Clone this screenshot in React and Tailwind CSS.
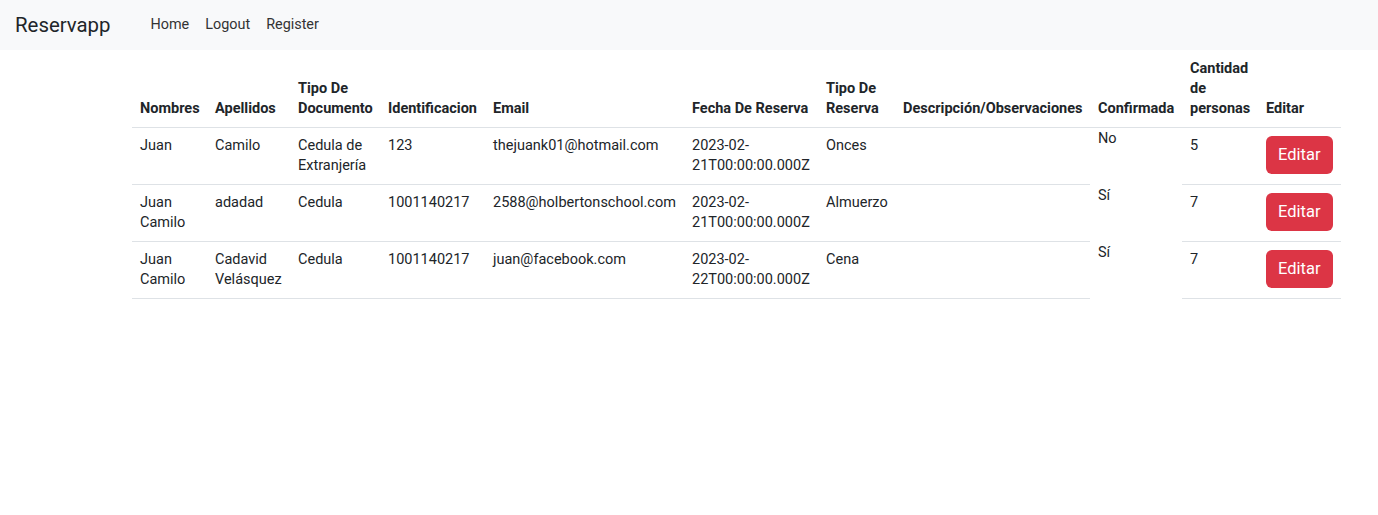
const reservas = [
  {
    nombres: 'Juan',
    apellidos: 'Camilo',
    tipoDoc: 'Cedula de Extranjería',
    id: '123',
    email: 'thejuank01@hotmail.com',
    fecha: '2023-02-21T00:00:00.000Z',
    tipo: 'Onces',
    desc: '',
    confirmada: 'No',
    cantidad: 5,
  },
  {
    nombres: 'Juan Camilo',
    apellidos: 'adadad',
    tipoDoc: 'Cedula',
    id: '1001140217',
    email: '2588@holbertonschool.com',
    fecha: '2023-02-21T00:00:00.000Z',
    tipo: 'Almuerzo',
    desc: '',
    confirmada: 'Sí',
    cantidad: 7,
  },
  {
    nombres: 'Juan Camilo',
    apellidos: 'Cadavid Velásquez',
    tipoDoc: 'Cedula',
    id: '1001140217',
    email: 'juan@facebook.com',
    fecha: '2023-02-22T00:00:00.000Z',
    tipo: 'Cena',
    desc: '',
    confirmada: 'Sí',
    cantidad: 7,
  },
];

const th = 'px-2 pt-[9px] pb-2 align-bottom text-left font-bold border-b border-[#dee2e6]';
const td = 'px-2 py-2 align-top border-b border-[#dee2e6]';

export default function App() {
  return (
    <div className="min-h-[515px] bg-white font-['Roboto','Liberation_Sans',sans-serif] text-[#212529]">
      <nav className="flex h-[50px] items-center bg-[#f8f9fa]">
        <a className="ml-[15px] text-[20.4px] leading-[30px] text-[#212529]">Reservapp</a>
        <ul className="ml-[32px] flex text-[14.4px] text-[#333]">
          <li className="px-2">Home</li>
          <li className="px-2">Logout</li>
          <li className="px-2">Register</li>
        </ul>
      </nav>

      <table className="ml-[132px] w-[1209px] table-fixed border-collapse text-[14.5px] leading-[20px]">
        <colgroup>
          <col className="w-[75px]" />
          <col className="w-[83px]" />
          <col className="w-[90px]" />
          <col className="w-[105px]" />
          <col className="w-[199px]" />
          <col className="w-[134px]" />
          <col className="w-[77px]" />
          <col className="w-[195px]" />
          <col className="w-[92px]" />
          <col className="w-[76px]" />
          <col className="w-[83px]" />
        </colgroup>
        <thead>
          <tr>
            <th className={th}>Nombres</th>
            <th className={th}>Apellidos</th>
            <th className={th}>Tipo De<br />Documento</th>
            <th className={`${th} whitespace-nowrap`}>Identificacion</th>
            <th className={th}>Email</th>
            <th className={`${th} whitespace-nowrap`}>Fecha De Reserva</th>
            <th className={th}>Tipo De<br />Reserva</th>
            <th className={`${th} whitespace-nowrap`}>Descripción/Observaciones</th>
            <th className={`${th} whitespace-nowrap`}>Confirmada</th>
            <th className={`${th} whitespace-nowrap`}>Cantidad<br />de<br />personas</th>
            <th className={th}>Editar</th>
          </tr>
        </thead>
        <tbody>
          {reservas.map((r, i) => (
            <tr key={i}>
              <td className={td}>{r.nombres}</td>
              <td className={td}>{r.apellidos}</td>
              <td className={td}>{r.tipoDoc}</td>
              <td className={td}>{r.id}</td>
              <td className={`${td} whitespace-nowrap`}>{r.email}</td>
              <td className={`${td} whitespace-nowrap`}>{r.fecha.slice(0, 8)}<br />{r.fecha.slice(8)}</td>
              <td className={td}>{r.tipo}</td>
              <td className={td}>{r.desc}</td>
              <td className="px-2 pt-[1px] align-top">{r.confirmada}</td>
              <td className={td}>{r.cantidad}</td>
              <td className={td}>
                <button
                  type="button"
                  className="h-[38px] rounded-[6px] bg-[#dc3545] px-3 text-[16.5px] leading-[24px] text-white"
                >
                  Editar
                </button>
              </td>
            </tr>
          ))}
        </tbody>
      </table>
    </div>
  );
}
